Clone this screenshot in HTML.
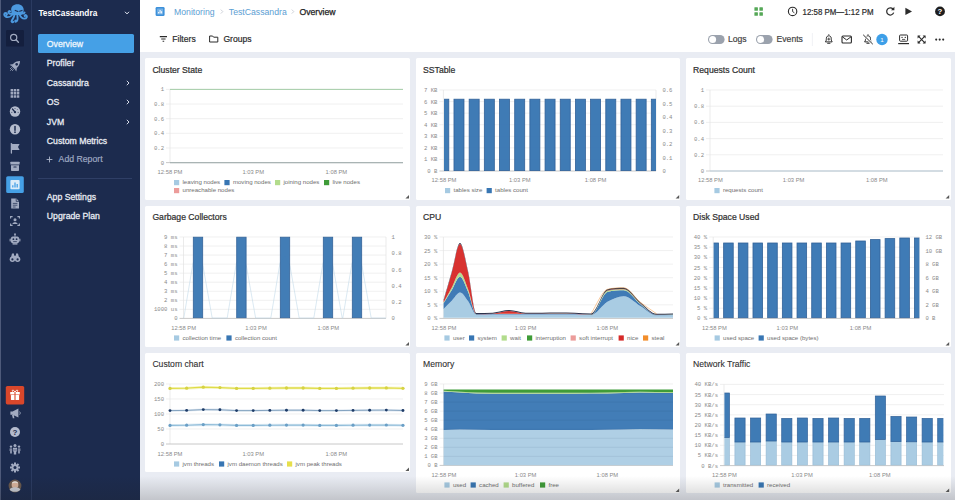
<!DOCTYPE html>
<html lang="en"><head><meta charset="utf-8"><title>TestCassandra - Overview</title>
<style>
*{margin:0;padding:0;box-sizing:border-box}
html,body{width:955px;height:500px;overflow:hidden}
body{position:relative;background:#e9ecf3;font-family:"Liberation Sans", sans-serif;color:#222}
.abs{position:absolute}
#iconbar{position:absolute;left:0;top:0;width:32px;height:500px;background:#1c2b4e;border-right:1px solid #2b3b61}
#edge{position:absolute;left:0;top:0;width:1.3px;height:500px;background:#4e5a7a}
#menu{position:absolute;left:32px;top:0;width:108.4px;height:500px;background:#1c2b4e}
#top{position:absolute;left:140.4px;top:0;width:814.6px;height:52px;background:#fff}
.card{position:absolute;background:#fff;border-radius:1.5px}
.ct{position:absolute;left:7.4px;top:5.6px;font-size:8.65px;line-height:12px;color:#303030;white-space:nowrap}
.ct.b{-webkit-text-stroke:0.22px #303030}
.ct.n{-webkit-text-stroke:0.1px #303030}
.app{position:absolute;left:6.4px;top:7px;font-size:8.3px;font-weight:bold;color:#fff;line-height:12px;white-space:nowrap}
.mi{position:absolute;left:14.8px;font-size:8.7px;line-height:14px;color:#e9ecf3;white-space:nowrap;-webkit-text-stroke:0.28px #e9ecf3}
.chev{position:absolute;left:94px}
#ov{position:absolute;left:5.6px;top:34.4px;width:96px;height:19px;background:#45a0e6;border-radius:1.6px}
#ov span{position:absolute;left:9.2px;top:2.8px;font-size:8.7px;line-height:14px;color:#eef6fd;-webkit-text-stroke:0.28px #eef6fd}
.bc{position:absolute;top:5.5px;font-size:8.7px;line-height:12px;white-space:nowrap}
.tb{position:absolute;top:33.5px;font-size:8.6px;line-height:12px;white-space:nowrap;color:#333;-webkit-text-stroke:0.2px #333}
svg text.s{font-family:"Liberation Sans", sans-serif}
svg text.m{font-family:"Liberation Mono", monospace}
#charts{position:absolute;left:0;top:0}
#shade{position:absolute;left:0;top:476px;width:955px;height:24px;background:linear-gradient(to bottom,rgba(30,30,30,0),rgba(30,30,30,0.19));pointer-events:none}
</style></head><body>
<div id="top"></div>
<svg class="abs" style="left:0;top:0" width="955" height="52" viewBox="0 0 955 52"><rect x="155.6" y="7" width="9" height="9" rx="1.3" fill="#3c90da"/><rect x="157.1" y="8.5" width="6" height="6" rx="0.6" fill="#fff" opacity="0.3"/><path d="M158.6 13.4 V12 M160.1 13.4 V10 M161.6 13.4 V11.2" stroke="#fff" stroke-width="0.95"/><text class="s" x="174" y="14.6" font-size="8.7" fill="#5b9ed3">Monitoring</text><path d="M220.8 9.6 L222.8 11.6 L220.8 13.6" fill="none" stroke="#c3c7cf" stroke-width="0.8"/><text class="s" x="228.8" y="14.6" font-size="8.7" fill="#5b9ed3">TestCassandra</text><path d="M291.8 9.6 L293.8 11.6 L291.8 13.6" fill="none" stroke="#c3c7cf" stroke-width="0.8"/><text class="s" x="299.4" y="14.6" font-size="8.7" fill="#222" stroke="#222" stroke-width="0.25">Overview</text><path d="M159.8 36.6 H167 M161.2 39 H165.6 M162.6 41.3 H164.2" stroke="#2b2b2b" stroke-width="1.1"/><text class="s" x="172.3" y="42.1" font-size="8.6" fill="#2b2b2b" stroke="#2b2b2b" stroke-width="0.2">Filters</text><path d="M209.6 36 H212.6 L213.6 37.2 H217.8 V42 H209.6 Z" fill="none" stroke="#2b2b2b" stroke-width="1" stroke-linejoin="round"/><text class="s" x="223.4" y="42.1" font-size="8.6" fill="#2b2b2b" stroke="#2b2b2b" stroke-width="0.2">Groups</text><rect x="754.4" y="7.2" width="3.5" height="3.5" rx="0.5" fill="#55a857"/><rect x="759.4" y="7.2" width="3.5" height="3.5" rx="0.5" fill="#55a857"/><rect x="754.4" y="12.2" width="3.5" height="3.5" rx="0.5" fill="#55a857"/><rect x="759.4" y="12.2" width="3.5" height="3.5" rx="0.5" fill="#55a857"/><circle cx="792.6" cy="11.4" r="4.2" fill="none" stroke="#2b2b2b" stroke-width="1.1"/><path d="M792.6 8.8 V11.6 L794.4 12.8" fill="none" stroke="#2b2b2b" stroke-width="0.9"/><text class="s" x="802.6" y="14.5" font-size="8.2" textLength="71" lengthAdjust="spacingAndGlyphs" fill="#2b2b2b" stroke="#2b2b2b" stroke-width="0.2">12:58 PM—1:12 PM</text><path d="M893 9 A3.6 3.6 0 1 0 893.7 12.6" fill="none" stroke="#2b2b2b" stroke-width="1.25"/><path d="M894.4 6.8 V10.2 H891 Z" fill="#2b2b2b"/><path d="M905.4 7.8 L912 11.4 L905.4 15 Z" fill="#2b2b2b"/><circle cx="940" cy="11.4" r="4.9" fill="#1e1e1e"/><text class="s" x="940" y="14.3" font-size="7.8" font-weight="bold" text-anchor="middle" fill="#fff">?</text><rect x="708" y="35" width="16.6" height="9" rx="4.5" fill="#9ba2ad"/><circle cx="712.6" cy="39.5" r="3.5" fill="#fff"/><rect x="756" y="35" width="16.6" height="9" rx="4.5" fill="#9ba2ad"/><circle cx="760.6" cy="39.5" r="3.5" fill="#fff"/><text class="s" x="728" y="42.3" font-size="8.6" fill="#444" stroke="#444" stroke-width="0.2">Logs</text><text class="s" x="776.6" y="42.3" font-size="8.6" fill="#444" stroke="#444" stroke-width="0.2">Events</text><path d="M812.4 33 V46" stroke="#eceef2" stroke-width="0.8"/><path d="M825.4 41.9 C826.5999999999999 40.7 826.1999999999999 38.7 826.4 37.9 C826.8 35.1 830.8 35.1 831.1999999999999 37.9 C831.4 38.7 831.0 40.7 832.1999999999999 41.9 Z" fill="none" stroke="#2b2b2b" stroke-width="1" stroke-linejoin="round"/><path d="M827.6999999999999 43.2 H829.9" stroke="#2b2b2b" stroke-width="1.1" stroke-linecap="round"/><path d="M828.8 35.1 V34.3" stroke="#2b2b2b" stroke-width="1"/><path d="M828.8 37.6 V40.6 M827.3 39.1 H830.3" stroke="#2b2b2b" stroke-width="0.8"/><rect x="842" y="36" width="9.4" height="7" rx="1" fill="none" stroke="#2b2b2b" stroke-width="1.1"/><path d="M842.4 36.8 L846.7 40 L851 36.8" fill="none" stroke="#2b2b2b" stroke-width="1"/><path d="M864.6 41.9 C865.8 40.7 865.4 38.7 865.6 37.9 C866 35.1 870 35.1 870.4 37.9 C870.6 38.7 870.2 40.7 871.4 41.9 Z" fill="none" stroke="#2b2b2b" stroke-width="1" stroke-linejoin="round"/><path d="M866.9 43.2 H869.1" stroke="#2b2b2b" stroke-width="1.1" stroke-linecap="round"/><path d="M868 35.1 V34.3" stroke="#2b2b2b" stroke-width="1"/><path d="M863 34.6 L873 44.4" stroke="#fff" stroke-width="2.4"/><path d="M863.2 34.8 L872.8 44.2" stroke="#2b2b2b" stroke-width="1"/><circle cx="882" cy="39.5" r="5.7" fill="#3d9fe8"/><text class="s" x="882" y="41.7" font-size="6.2" text-anchor="middle" fill="#fff">1</text><rect x="899.6" y="35" width="8" height="6.2" rx="0.8" fill="none" stroke="#2b2b2b" stroke-width="1"/><path d="M898.2 43.6 H909 " stroke="#2b2b2b" stroke-width="1.2"/><path d="M902 37.4h.1M905.2 37.4h.1" stroke="#2b2b2b" stroke-width="1.2" stroke-linecap="round"/><path d="M902 39.4 H905.2" stroke="#2b2b2b" stroke-width="0.8"/><path d="M918.4 36.2 L924.8 42.8 M924.8 36.2 L918.4 42.8" stroke="#2b2b2b" stroke-width="1.1"/><path d="M917.6 35.4 H920.6 L917.6 38.4 Z M925.6 35.4 V38.4 L922.6 35.4 Z M917.6 43.6 V40.6 L920.6 43.6 Z M925.6 43.6 H922.6 L925.6 40.6 Z" fill="#2b2b2b"/><circle cx="936.2" cy="39.6" r="1.05" fill="#2b2b2b"/><circle cx="939.7" cy="39.6" r="1.05" fill="#2b2b2b"/><circle cx="943.2" cy="39.6" r="1.05" fill="#2b2b2b"/></svg>
<div class="card" style="left:145px;top:58px;width:265.3px;height:141.8px"><div class="ct b">Cluster State</div></div>
<div class="card" style="left:415.7px;top:58px;width:264.6px;height:141.8px"><div class="ct b">SSTable</div></div>
<div class="card" style="left:685.7px;top:58px;width:264.9px;height:141.8px"><div class="ct b">Requests Count</div></div>
<div class="card" style="left:145px;top:205.6px;width:265.3px;height:141.4px"><div class="ct b">Garbage Collectors</div></div>
<div class="card" style="left:415.7px;top:205.6px;width:264.6px;height:141.4px"><div class="ct b">CPU</div></div>
<div class="card" style="left:685.7px;top:205.6px;width:264.9px;height:141.4px"><div class="ct b">Disk Space Used</div></div>
<div class="card" style="left:145px;top:352.8px;width:265.3px;height:119.6px"><div class="ct n">Custom chart</div></div>
<div class="card" style="left:415.7px;top:352.8px;width:264.6px;height:140.6px"><div class="ct n">Memory</div></div>
<div class="card" style="left:685.7px;top:352.8px;width:264.9px;height:140.6px"><div class="ct n">Network Traffic</div></div>

<svg id="charts" width="955" height="500" viewBox="0 0 955 500">
<line x1="166" y1="89.4" x2="403" y2="89.4" stroke="#eaeaea" stroke-width="0.7"/>
<text class="m" x="164" y="91.4" font-size="5.6" text-anchor="end" fill="#8a8a8a">1</text>
<line x1="166" y1="104.04" x2="403" y2="104.04" stroke="#eaeaea" stroke-width="0.7"/>
<text class="m" x="164" y="106.04" font-size="5.6" text-anchor="end" fill="#8a8a8a">0.8</text>
<line x1="166" y1="118.68" x2="403" y2="118.68" stroke="#eaeaea" stroke-width="0.7"/>
<text class="m" x="164" y="120.68" font-size="5.6" text-anchor="end" fill="#8a8a8a">0.6</text>
<line x1="166" y1="133.32" x2="403" y2="133.32" stroke="#eaeaea" stroke-width="0.7"/>
<text class="m" x="164" y="135.32" font-size="5.6" text-anchor="end" fill="#8a8a8a">0.4</text>
<line x1="166" y1="147.96" x2="403" y2="147.96" stroke="#eaeaea" stroke-width="0.7"/>
<text class="m" x="164" y="149.96" font-size="5.6" text-anchor="end" fill="#8a8a8a">0.2</text>
<text class="m" x="164" y="164.6" font-size="5.6" text-anchor="end" fill="#8a8a8a">0</text>
<line x1="170" y1="89.4" x2="170" y2="162.6" stroke="#e2e2e2" stroke-width="0.7"/>
<line x1="166" y1="162.6" x2="403" y2="162.6" stroke="#c2c2c2" stroke-width="0.9"/>
<text class="s" x="170" y="174.1" font-size="5.8" text-anchor="middle" fill="#8a8a8a">12:58 PM</text>
<text class="s" x="253.2" y="174.1" font-size="5.8" text-anchor="middle" fill="#8a8a8a">1:03 PM</text>
<text class="s" x="336.4" y="174.1" font-size="5.8" text-anchor="middle" fill="#8a8a8a">1:08 PM</text>
<line x1="170" y1="89.4" x2="403" y2="89.4" stroke="#9cc8a0" stroke-width="0.9"/>
<line x1="170" y1="162.6" x2="403" y2="162.6" stroke="#a9b4b4" stroke-width="1.3"/>
<rect x="174" y="180" width="5.2" height="5.2" fill="#a6cae2"/>
<text class="s" x="182.5" y="184.4" font-size="6.1" text-anchor="start" fill="#6f6f6f">leaving nodes</text>
<rect x="224.4" y="180" width="5.2" height="5.2" fill="#3876b3"/>
<text class="s" x="232.9" y="184.4" font-size="6.1" text-anchor="start" fill="#6f6f6f">moving nodes</text>
<rect x="275" y="180" width="5.2" height="5.2" fill="#b2dc8c"/>
<text class="s" x="283.5" y="184.4" font-size="6.1" text-anchor="start" fill="#6f6f6f">joining nodes</text>
<rect x="324" y="180" width="5.2" height="5.2" fill="#3f9c38"/>
<text class="s" x="332.5" y="184.4" font-size="6.1" text-anchor="start" fill="#6f6f6f">live nodes</text>
<rect x="174" y="188" width="5.2" height="5.2" fill="#ec9c9a"/>
<text class="s" x="182.5" y="192.4" font-size="6.1" text-anchor="start" fill="#6f6f6f">unreachable nodes</text>
<path d="M409 195 L409 198.6 L405.4 198.6 Z" fill="#5a5a5a"/>
<line x1="439.4" y1="90" x2="656" y2="90" stroke="#eaeaea" stroke-width="0.7"/>
<text class="m" x="437.4" y="92" font-size="5.6" text-anchor="end" fill="#8a8a8a">7 KB</text>
<line x1="439.4" y1="101.57" x2="656" y2="101.57" stroke="#eaeaea" stroke-width="0.7"/>
<text class="m" x="437.4" y="103.57" font-size="5.6" text-anchor="end" fill="#8a8a8a">6 KB</text>
<line x1="439.4" y1="113.14" x2="656" y2="113.14" stroke="#eaeaea" stroke-width="0.7"/>
<text class="m" x="437.4" y="115.14" font-size="5.6" text-anchor="end" fill="#8a8a8a">5 KB</text>
<line x1="439.4" y1="124.71" x2="656" y2="124.71" stroke="#eaeaea" stroke-width="0.7"/>
<text class="m" x="437.4" y="126.71" font-size="5.6" text-anchor="end" fill="#8a8a8a">4 KB</text>
<line x1="439.4" y1="136.29" x2="656" y2="136.29" stroke="#eaeaea" stroke-width="0.7"/>
<text class="m" x="437.4" y="138.29" font-size="5.6" text-anchor="end" fill="#8a8a8a">3 KB</text>
<line x1="439.4" y1="147.86" x2="656" y2="147.86" stroke="#eaeaea" stroke-width="0.7"/>
<text class="m" x="437.4" y="149.86" font-size="5.6" text-anchor="end" fill="#8a8a8a">2 KB</text>
<line x1="439.4" y1="159.43" x2="656" y2="159.43" stroke="#eaeaea" stroke-width="0.7"/>
<text class="m" x="437.4" y="161.43" font-size="5.6" text-anchor="end" fill="#8a8a8a">1 KB</text>
<text class="m" x="437.4" y="173" font-size="5.6" text-anchor="end" fill="#8a8a8a">0 B</text>
<line x1="443.4" y1="90" x2="443.4" y2="171" stroke="#e2e2e2" stroke-width="0.7"/>
<line x1="439.4" y1="171" x2="656" y2="171" stroke="#c2c2c2" stroke-width="0.9"/>
<text class="s" x="444" y="182.1" font-size="5.8" text-anchor="middle" fill="#8a8a8a">12:58 PM</text>
<text class="s" x="519.8" y="182.1" font-size="5.8" text-anchor="middle" fill="#8a8a8a">1:03 PM</text>
<text class="s" x="595.6" y="182.1" font-size="5.8" text-anchor="middle" fill="#8a8a8a">1:08 PM</text>
<text class="m" x="662.4" y="92.4" font-size="5.6" text-anchor="start" fill="#8a8a8a">0.6</text>
<text class="m" x="662.4" y="105.85" font-size="5.6" text-anchor="start" fill="#8a8a8a">0.5</text>
<text class="m" x="662.4" y="119.3" font-size="5.6" text-anchor="start" fill="#8a8a8a">0.4</text>
<text class="m" x="662.4" y="132.75" font-size="5.6" text-anchor="start" fill="#8a8a8a">0.3</text>
<text class="m" x="662.4" y="146.2" font-size="5.6" text-anchor="start" fill="#8a8a8a">0.2</text>
<text class="m" x="662.4" y="159.65" font-size="5.6" text-anchor="start" fill="#8a8a8a">0.1</text>
<text class="m" x="662.4" y="173.1" font-size="5.6" text-anchor="start" fill="#8a8a8a">0</text>
<line x1="656" y1="90" x2="656" y2="171" stroke="#e2e2e2" stroke-width="0.7"/>
<clipPath id="c2"><rect x="444" y="89" width="212" height="82"/></clipPath>
<g clip-path="url(#c2)" opacity="0.96">
<rect x="438.8" y="99.2" width="10" height="71.4" fill="#3876b3" stroke="#2a5c95" stroke-width="0.8"/>
<rect x="453.98" y="99.2" width="10" height="71.4" fill="#3876b3" stroke="#2a5c95" stroke-width="0.8"/>
<rect x="469.16" y="99.2" width="10" height="71.4" fill="#3876b3" stroke="#2a5c95" stroke-width="0.8"/>
<rect x="484.34" y="99.2" width="10" height="71.4" fill="#3876b3" stroke="#2a5c95" stroke-width="0.8"/>
<rect x="499.52" y="99.2" width="10" height="71.4" fill="#3876b3" stroke="#2a5c95" stroke-width="0.8"/>
<rect x="514.7" y="99.2" width="10" height="71.4" fill="#3876b3" stroke="#2a5c95" stroke-width="0.8"/>
<rect x="529.88" y="99.2" width="10" height="71.4" fill="#3876b3" stroke="#2a5c95" stroke-width="0.8"/>
<rect x="545.06" y="99.2" width="10" height="71.4" fill="#3876b3" stroke="#2a5c95" stroke-width="0.8"/>
<rect x="560.24" y="99.2" width="10" height="71.4" fill="#3876b3" stroke="#2a5c95" stroke-width="0.8"/>
<rect x="575.42" y="99.2" width="10" height="71.4" fill="#3876b3" stroke="#2a5c95" stroke-width="0.8"/>
<rect x="590.6" y="99.2" width="10" height="71.4" fill="#3876b3" stroke="#2a5c95" stroke-width="0.8"/>
<rect x="605.78" y="99.2" width="10" height="71.4" fill="#3876b3" stroke="#2a5c95" stroke-width="0.8"/>
<rect x="620.96" y="99.2" width="10" height="71.4" fill="#3876b3" stroke="#2a5c95" stroke-width="0.8"/>
<rect x="636.14" y="99.2" width="10" height="71.4" fill="#3876b3" stroke="#2a5c95" stroke-width="0.8"/>
<rect x="651.32" y="99.2" width="10" height="71.4" fill="#3876b3" stroke="#2a5c95" stroke-width="0.8"/>
</g>
<rect x="445" y="188" width="5.2" height="5.2" fill="#a6cae2"/>
<text class="s" x="453.5" y="192.4" font-size="6.1" text-anchor="start" fill="#6f6f6f">tables size</text>
<rect x="486.6" y="188" width="5.2" height="5.2" fill="#3876b3"/>
<text class="s" x="495.1" y="192.4" font-size="6.1" text-anchor="start" fill="#6f6f6f">tables count</text>
<path d="M679.2 195 L679.2 198.6 L675.6 198.6 Z" fill="#5a5a5a"/>
<line x1="706" y1="90" x2="943" y2="90" stroke="#eaeaea" stroke-width="0.7"/>
<text class="m" x="704" y="92" font-size="5.6" text-anchor="end" fill="#8a8a8a">1</text>
<line x1="706" y1="106.2" x2="943" y2="106.2" stroke="#eaeaea" stroke-width="0.7"/>
<text class="m" x="704" y="108.2" font-size="5.6" text-anchor="end" fill="#8a8a8a">0.8</text>
<line x1="706" y1="122.4" x2="943" y2="122.4" stroke="#eaeaea" stroke-width="0.7"/>
<text class="m" x="704" y="124.4" font-size="5.6" text-anchor="end" fill="#8a8a8a">0.6</text>
<line x1="706" y1="138.6" x2="943" y2="138.6" stroke="#eaeaea" stroke-width="0.7"/>
<text class="m" x="704" y="140.6" font-size="5.6" text-anchor="end" fill="#8a8a8a">0.4</text>
<line x1="706" y1="154.8" x2="943" y2="154.8" stroke="#eaeaea" stroke-width="0.7"/>
<text class="m" x="704" y="156.8" font-size="5.6" text-anchor="end" fill="#8a8a8a">0.2</text>
<text class="m" x="704" y="173" font-size="5.6" text-anchor="end" fill="#8a8a8a">0</text>
<line x1="710" y1="90" x2="710" y2="171" stroke="#e2e2e2" stroke-width="0.7"/>
<line x1="706" y1="171" x2="943" y2="171" stroke="#c2c2c2" stroke-width="0.9"/>
<text class="s" x="710.4" y="182.1" font-size="5.8" text-anchor="middle" fill="#8a8a8a">12:58 PM</text>
<text class="s" x="793.6" y="182.1" font-size="5.8" text-anchor="middle" fill="#8a8a8a">1:03 PM</text>
<text class="s" x="876.8" y="182.1" font-size="5.8" text-anchor="middle" fill="#8a8a8a">1:08 PM</text>
<line x1="710" y1="171" x2="943" y2="171" stroke="#c3d5e2" stroke-width="1.0"/>
<rect x="714.4" y="188" width="5.2" height="5.2" fill="#a6cae2"/>
<text class="s" x="722.9" y="192.4" font-size="6.1" text-anchor="start" fill="#6f6f6f">requests count</text>
<path d="M949.2 195 L949.2 198.6 L945.6 198.6 Z" fill="#5a5a5a"/>
<line x1="179.5" y1="237" x2="386" y2="237" stroke="#eaeaea" stroke-width="0.7"/>
<text class="m" x="177.5" y="239" font-size="5.6" text-anchor="end" fill="#8a8a8a">9 ms</text>
<line x1="179.5" y1="246.04" x2="386" y2="246.04" stroke="#eaeaea" stroke-width="0.7"/>
<text class="m" x="177.5" y="248.04" font-size="5.6" text-anchor="end" fill="#8a8a8a">8 ms</text>
<line x1="179.5" y1="255.09" x2="386" y2="255.09" stroke="#eaeaea" stroke-width="0.7"/>
<text class="m" x="177.5" y="257.09" font-size="5.6" text-anchor="end" fill="#8a8a8a">7 ms</text>
<line x1="179.5" y1="264.13" x2="386" y2="264.13" stroke="#eaeaea" stroke-width="0.7"/>
<text class="m" x="177.5" y="266.13" font-size="5.6" text-anchor="end" fill="#8a8a8a">6 ms</text>
<line x1="179.5" y1="273.18" x2="386" y2="273.18" stroke="#eaeaea" stroke-width="0.7"/>
<text class="m" x="177.5" y="275.18" font-size="5.6" text-anchor="end" fill="#8a8a8a">5 ms</text>
<line x1="179.5" y1="282.22" x2="386" y2="282.22" stroke="#eaeaea" stroke-width="0.7"/>
<text class="m" x="177.5" y="284.22" font-size="5.6" text-anchor="end" fill="#8a8a8a">4 ms</text>
<line x1="179.5" y1="291.27" x2="386" y2="291.27" stroke="#eaeaea" stroke-width="0.7"/>
<text class="m" x="177.5" y="293.27" font-size="5.6" text-anchor="end" fill="#8a8a8a">3 ms</text>
<line x1="179.5" y1="300.31" x2="386" y2="300.31" stroke="#eaeaea" stroke-width="0.7"/>
<text class="m" x="177.5" y="302.31" font-size="5.6" text-anchor="end" fill="#8a8a8a">2 ms</text>
<line x1="179.5" y1="309.36" x2="386" y2="309.36" stroke="#eaeaea" stroke-width="0.7"/>
<text class="m" x="177.5" y="311.36" font-size="5.6" text-anchor="end" fill="#8a8a8a">1000 us</text>
<text class="m" x="177.5" y="320.4" font-size="5.6" text-anchor="end" fill="#8a8a8a">0</text>
<line x1="183.5" y1="237" x2="183.5" y2="318.4" stroke="#e2e2e2" stroke-width="0.7"/>
<line x1="179.5" y1="318.4" x2="386" y2="318.4" stroke="#c2c2c2" stroke-width="0.9"/>
<text class="s" x="183.6" y="329.5" font-size="5.8" text-anchor="middle" fill="#8a8a8a">12:58 PM</text>
<text class="s" x="256" y="329.5" font-size="5.8" text-anchor="middle" fill="#8a8a8a">1:03 PM</text>
<text class="s" x="328.4" y="329.5" font-size="5.8" text-anchor="middle" fill="#8a8a8a">1:08 PM</text>
<text class="m" x="391.6" y="239" font-size="5.6" text-anchor="start" fill="#8a8a8a">1</text>
<text class="m" x="391.6" y="255.28" font-size="5.6" text-anchor="start" fill="#8a8a8a">0.8</text>
<text class="m" x="391.6" y="271.56" font-size="5.6" text-anchor="start" fill="#8a8a8a">0.6</text>
<text class="m" x="391.6" y="287.84" font-size="5.6" text-anchor="start" fill="#8a8a8a">0.4</text>
<text class="m" x="391.6" y="304.12" font-size="5.6" text-anchor="start" fill="#8a8a8a">0.2</text>
<text class="m" x="391.6" y="320.4" font-size="5.6" text-anchor="start" fill="#8a8a8a">0</text>
<line x1="386" y1="237" x2="386" y2="318.4" stroke="#e2e2e2" stroke-width="0.7"/>
<polyline fill="none" stroke="#bdd7e8" stroke-width="0.55" points="183.5,318 183.8,318 193,263 198,256 203,266 212.2,318 227.2,318 236.4,263 241.4,256 246.4,266 255.6,318 270.8,318 280,263 285,256 290,266 299.2,318 313.8,318 323,263 328,256 333,266 342.2,318 342.8,318 352,263 357,256 362,266 371.2,318 386,318"/>
<clipPath id="c4"><rect x="183.5" y="236" width="202.5" height="82.4"/></clipPath>
<g clip-path="url(#c4)" opacity="0.95">
<rect x="193.3" y="237.2" width="9.4" height="80.6" fill="#3876b3" stroke="#2a5c95" stroke-width="0.8"/>
<rect x="236.7" y="237.2" width="9.4" height="80.6" fill="#3876b3" stroke="#2a5c95" stroke-width="0.8"/>
<rect x="280.3" y="237.2" width="9.4" height="80.6" fill="#3876b3" stroke="#2a5c95" stroke-width="0.8"/>
<rect x="323.3" y="237.2" width="9.4" height="80.6" fill="#3876b3" stroke="#2a5c95" stroke-width="0.8"/>
<rect x="352.3" y="237.2" width="9.4" height="80.6" fill="#3876b3" stroke="#2a5c95" stroke-width="0.8"/>
</g>
<rect x="174" y="335.4" width="5.2" height="5.2" fill="#a6cae2"/>
<text class="s" x="182.5" y="339.8" font-size="6.1" text-anchor="start" fill="#6f6f6f">collection time</text>
<rect x="226.4" y="335.4" width="5.2" height="5.2" fill="#3876b3"/>
<text class="s" x="234.9" y="339.8" font-size="6.1" text-anchor="start" fill="#6f6f6f">collection count</text>
<path d="M409 342 L409 345.6 L405.4 345.6 Z" fill="#5a5a5a"/>
<line x1="439.4" y1="237" x2="673" y2="237" stroke="#eaeaea" stroke-width="0.7"/>
<text class="m" x="437.4" y="239" font-size="5.6" text-anchor="end" fill="#8a8a8a">30 %</text>
<line x1="439.4" y1="250.57" x2="673" y2="250.57" stroke="#eaeaea" stroke-width="0.7"/>
<text class="m" x="437.4" y="252.57" font-size="5.6" text-anchor="end" fill="#8a8a8a">25 %</text>
<line x1="439.4" y1="264.13" x2="673" y2="264.13" stroke="#eaeaea" stroke-width="0.7"/>
<text class="m" x="437.4" y="266.13" font-size="5.6" text-anchor="end" fill="#8a8a8a">20 %</text>
<line x1="439.4" y1="277.7" x2="673" y2="277.7" stroke="#eaeaea" stroke-width="0.7"/>
<text class="m" x="437.4" y="279.7" font-size="5.6" text-anchor="end" fill="#8a8a8a">15 %</text>
<line x1="439.4" y1="291.27" x2="673" y2="291.27" stroke="#eaeaea" stroke-width="0.7"/>
<text class="m" x="437.4" y="293.27" font-size="5.6" text-anchor="end" fill="#8a8a8a">10 %</text>
<line x1="439.4" y1="304.83" x2="673" y2="304.83" stroke="#eaeaea" stroke-width="0.7"/>
<text class="m" x="437.4" y="306.83" font-size="5.6" text-anchor="end" fill="#8a8a8a">5 %</text>
<text class="m" x="437.4" y="320.4" font-size="5.6" text-anchor="end" fill="#8a8a8a">0 %</text>
<line x1="443.4" y1="237" x2="443.4" y2="318.4" stroke="#e2e2e2" stroke-width="0.7"/>
<line x1="439.4" y1="318.4" x2="673" y2="318.4" stroke="#c2c2c2" stroke-width="0.9"/>
<text class="s" x="444" y="329.5" font-size="5.8" text-anchor="middle" fill="#8a8a8a">12:58 PM</text>
<text class="s" x="525.6" y="329.5" font-size="5.8" text-anchor="middle" fill="#8a8a8a">1:03 PM</text>
<text class="s" x="607.4" y="329.5" font-size="5.8" text-anchor="middle" fill="#8a8a8a">1:08 PM</text>
<path d="M443.6 308.89C446.33 306.14 449.06 303.4 451.79 300.66C454.52 297.91 457.25 292.42 459.99 292.42C462.72 292.42 465.45 297.62 468.18 301.36C470.91 305.09 473.64 314.83 476.37 314.83C481.83 314.83 487.3 314.56 492.76 314.56C498.22 314.56 503.68 314.56 509.14 314.56C514.6 314.56 520.07 314.56 525.53 314.56C530.99 314.56 536.45 314.56 541.91 314.56C547.38 314.56 552.84 314.56 558.3 314.56C563.76 314.56 569.22 314.56 574.69 314.56C580.15 314.56 585.61 315.1 591.07 315.1C596.53 315.1 602 305.02 607.46 301.87C612.92 298.72 618.38 296.2 623.84 296.2C629.3 296.2 634.77 302.73 640.23 305.92C645.69 309.12 651.15 315.37 656.61 315.37C662.08 315.37 667.54 315.19 673 315.1L673 317.8C667.54 317.8 662.08 317.8 656.61 317.8C651.15 317.8 645.69 317.8 640.23 317.8C634.77 317.8 629.3 317.8 623.84 317.8C618.38 317.8 612.92 317.8 607.46 317.8C602 317.8 596.53 317.8 591.07 317.8C585.61 317.8 580.15 317.8 574.69 317.8C569.22 317.8 563.76 317.8 558.3 317.8C552.84 317.8 547.38 317.8 541.91 317.8C536.45 317.8 530.99 317.8 525.53 317.8C520.07 317.8 514.6 317.8 509.14 317.8C503.68 317.8 498.22 317.8 492.76 317.8C487.3 317.8 481.83 317.8 476.37 317.8C473.64 317.8 470.91 317.8 468.18 317.8C465.45 317.8 462.72 317.8 459.99 317.8C457.25 317.8 454.52 317.8 451.79 317.8C449.06 317.8 446.33 317.8 443.6 317.8Z" fill="#a6cae2" opacity="0.96"/>
<path d="M443.6 303.22C446.33 298.81 449.06 294.4 451.79 289.99C454.52 285.58 457.25 276.76 459.99 276.76C462.72 276.76 465.45 285.71 468.18 291.96C470.91 298.22 473.64 314.29 476.37 314.29C481.83 314.29 487.3 314.09 492.76 314.02C498.22 313.95 503.68 313.88 509.14 313.88C514.6 313.88 520.07 314.02 525.53 314.02C530.99 314.02 536.45 314.02 541.91 314.02C547.38 314.02 552.84 313.88 558.3 313.88C563.76 313.88 569.22 313.89 574.69 314.02C580.15 314.16 585.61 314.69 591.07 314.69C596.53 314.69 602 293.5 607.46 291.88C612.92 290.26 618.38 290.26 623.84 290.26C629.3 290.26 634.77 299.91 640.23 304.03C645.69 308.15 651.15 314.97 656.61 314.97C662.08 314.97 667.54 314.79 673 314.69L673 315.1C667.54 315.19 662.08 315.37 656.61 315.37C651.15 315.37 645.69 309.12 640.23 305.92C634.77 302.73 629.3 296.2 623.84 296.2C618.38 296.2 612.92 298.72 607.46 301.87C602 305.02 596.53 315.1 591.07 315.1C585.61 315.1 580.15 314.56 574.69 314.56C569.22 314.56 563.76 314.56 558.3 314.56C552.84 314.56 547.38 314.56 541.91 314.56C536.45 314.56 530.99 314.56 525.53 314.56C520.07 314.56 514.6 314.56 509.14 314.56C503.68 314.56 498.22 314.56 492.76 314.56C487.3 314.56 481.83 314.83 476.37 314.83C473.64 314.83 470.91 305.09 468.18 301.36C465.45 297.62 462.72 292.42 459.99 292.42C457.25 292.42 454.52 297.91 451.79 300.66C449.06 303.4 446.33 306.14 443.6 308.89Z" fill="#3876b3" opacity="0.96"/>
<path d="M443.6 302.41C446.33 297.42 449.06 292.42 451.79 287.43C454.52 282.43 457.25 272.44 459.99 272.44C462.72 272.44 465.45 282.45 468.18 289.41C470.91 296.37 473.64 314.21 476.37 314.21C481.83 314.21 487.3 314.01 492.76 313.94C498.22 313.87 503.68 313.8 509.14 313.8C514.6 313.8 520.07 313.94 525.53 313.94C530.99 313.94 536.45 313.94 541.91 313.94C547.38 313.94 552.84 313.8 558.3 313.8C563.76 313.8 569.22 313.8 574.69 313.94C580.15 314.07 585.61 314.61 591.07 314.61C596.53 314.61 602 292.29 607.46 290.8C612.92 289.31 618.38 289.31 623.84 289.31C629.3 289.31 634.77 299.23 640.23 303.49C645.69 307.75 651.15 314.88 656.61 314.88C662.08 314.88 667.54 314.7 673 314.61L673 314.69C667.54 314.79 662.08 314.97 656.61 314.97C651.15 314.97 645.69 308.15 640.23 304.03C634.77 299.91 629.3 290.26 623.84 290.26C618.38 290.26 612.92 290.26 607.46 291.88C602 293.5 596.53 314.69 591.07 314.69C585.61 314.69 580.15 314.16 574.69 314.02C569.22 313.89 563.76 313.88 558.3 313.88C552.84 313.88 547.38 314.02 541.91 314.02C536.45 314.02 530.99 314.02 525.53 314.02C520.07 314.02 514.6 313.88 509.14 313.88C503.68 313.88 498.22 313.95 492.76 314.02C487.3 314.09 481.83 314.29 476.37 314.29C473.64 314.29 470.91 298.22 468.18 291.96C465.45 285.71 462.72 276.76 459.99 276.76C457.25 276.76 454.52 285.58 451.79 289.99C449.06 294.4 446.33 298.81 443.6 303.22Z" fill="#b2dc8c" opacity="0.96"/>
<path d="M443.6 300.79C446.33 291.34 449.06 281.89 451.79 272.44C454.52 262.99 457.25 244.09 459.99 244.09C462.72 244.09 465.45 261.25 468.18 272.92C470.91 284.59 473.64 314.13 476.37 314.13C481.83 314.13 487.3 314.13 492.76 313.75C498.22 313.37 503.68 311.05 509.14 311.05C514.6 311.05 520.07 313.64 525.53 313.75C530.99 313.86 536.45 313.86 541.91 313.86C547.38 313.86 552.84 313.62 558.3 313.62C563.76 313.62 569.22 313.7 574.69 313.86C580.15 314.02 585.61 314.56 591.07 314.56C596.53 314.56 602 291.88 607.46 290.39C612.92 288.91 618.38 288.91 623.84 288.91C629.3 288.91 634.77 298.9 640.23 303.22C645.69 307.54 651.15 314.83 656.61 314.83C662.08 314.83 667.54 314.65 673 314.56L673 314.61C667.54 314.7 662.08 314.88 656.61 314.88C651.15 314.88 645.69 307.75 640.23 303.49C634.77 299.23 629.3 289.31 623.84 289.31C618.38 289.31 612.92 289.31 607.46 290.8C602 292.29 596.53 314.61 591.07 314.61C585.61 314.61 580.15 314.07 574.69 313.94C569.22 313.8 563.76 313.8 558.3 313.8C552.84 313.8 547.38 313.94 541.91 313.94C536.45 313.94 530.99 313.94 525.53 313.94C520.07 313.94 514.6 313.8 509.14 313.8C503.68 313.8 498.22 313.87 492.76 313.94C487.3 314.01 481.83 314.21 476.37 314.21C473.64 314.21 470.91 296.37 468.18 289.41C465.45 282.45 462.72 272.44 459.99 272.44C457.25 272.44 454.52 282.43 451.79 287.43C449.06 292.42 446.33 297.42 443.6 302.41Z" fill="#d62a28" opacity="0.96"/>
<path d="M443.6 299.85C446.33 290.37 449.06 280.9 451.79 271.43C454.52 261.96 457.25 243.01 459.99 243.01C462.72 243.01 465.45 259.99 468.18 271.67C470.91 283.34 473.64 313.05 476.37 313.05C481.83 313.05 487.3 313.05 492.76 312.67C498.22 312.29 503.68 309.97 509.14 309.97C514.6 309.97 520.07 312.56 525.53 312.67C530.99 312.78 536.45 312.78 541.91 312.78C547.38 312.78 552.84 312.54 558.3 312.54C563.76 312.54 569.22 312.62 574.69 312.78C580.15 312.94 585.61 313.48 591.07 313.48C596.53 313.48 602 290.8 607.46 289.31C612.92 287.83 618.38 287.83 623.84 287.83C629.3 287.83 634.77 297.82 640.23 302.14C645.69 306.46 651.15 313.75 656.61 313.75C662.08 313.75 667.54 313.57 673 313.48L673 314.56C667.54 314.65 662.08 314.83 656.61 314.83C651.15 314.83 645.69 307.54 640.23 303.22C634.77 298.9 629.3 288.91 623.84 288.91C618.38 288.91 612.92 288.91 607.46 290.39C602 291.88 596.53 314.56 591.07 314.56C585.61 314.56 580.15 314.02 574.69 313.86C569.22 313.7 563.76 313.62 558.3 313.62C552.84 313.62 547.38 313.86 541.91 313.86C536.45 313.86 530.99 313.86 525.53 313.75C520.07 313.64 514.6 311.05 509.14 311.05C503.68 311.05 498.22 313.37 492.76 313.75C487.3 314.13 481.83 314.13 476.37 314.13C473.64 314.13 470.91 284.59 468.18 272.92C465.45 261.25 462.72 244.09 459.99 244.09C457.25 244.09 454.52 262.99 451.79 272.44C449.06 281.89 446.33 291.34 443.6 300.79Z" fill="#232a44" opacity="0.96"/>
<path d="M591.07 313.48C596.53 305.43 602 290.8 607.46 289.31C612.92 287.83 618.38 287.83 623.84 287.83C629.3 287.83 634.77 297.82 640.23 302.14C645.69 306.46 651.15 309.88 656.61 313.75" fill="none" stroke="#f28e2b" stroke-width="0.6" opacity="0.8"/>
<rect x="444.4" y="335.4" width="5.2" height="5.2" fill="#a6cae2"/>
<text class="s" x="452.9" y="339.8" font-size="6.1" text-anchor="start" fill="#6f6f6f">user</text>
<rect x="469" y="335.4" width="5.2" height="5.2" fill="#3876b3"/>
<text class="s" x="477.5" y="339.8" font-size="6.1" text-anchor="start" fill="#6f6f6f">system</text>
<rect x="501.6" y="335.4" width="5.2" height="5.2" fill="#b2dc8c"/>
<text class="s" x="510.1" y="339.8" font-size="6.1" text-anchor="start" fill="#6f6f6f">wait</text>
<rect x="527" y="335.4" width="5.2" height="5.2" fill="#3f9c38"/>
<text class="s" x="535.5" y="339.8" font-size="6.1" text-anchor="start" fill="#6f6f6f">interruption</text>
<rect x="570.6" y="335.4" width="5.2" height="5.2" fill="#ec9c9a"/>
<text class="s" x="579.1" y="339.8" font-size="6.1" text-anchor="start" fill="#6f6f6f">soft interrupt</text>
<rect x="618.6" y="335.4" width="5.2" height="5.2" fill="#d62a28"/>
<text class="s" x="627.1" y="339.8" font-size="6.1" text-anchor="start" fill="#6f6f6f">nice</text>
<rect x="643" y="335.4" width="5.2" height="5.2" fill="#f28e2b"/>
<text class="s" x="651.5" y="339.8" font-size="6.1" text-anchor="start" fill="#6f6f6f">steal</text>
<path d="M679.2 342 L679.2 345.6 L675.6 345.6 Z" fill="#5a5a5a"/>
<line x1="709.2" y1="237" x2="919.4" y2="237" stroke="#eaeaea" stroke-width="0.7"/>
<text class="m" x="707.2" y="239" font-size="5.6" text-anchor="end" fill="#8a8a8a">40 %</text>
<line x1="709.2" y1="247.18" x2="919.4" y2="247.18" stroke="#eaeaea" stroke-width="0.7"/>
<text class="m" x="707.2" y="249.18" font-size="5.6" text-anchor="end" fill="#8a8a8a">35 %</text>
<line x1="709.2" y1="257.35" x2="919.4" y2="257.35" stroke="#eaeaea" stroke-width="0.7"/>
<text class="m" x="707.2" y="259.35" font-size="5.6" text-anchor="end" fill="#8a8a8a">30 %</text>
<line x1="709.2" y1="267.52" x2="919.4" y2="267.52" stroke="#eaeaea" stroke-width="0.7"/>
<text class="m" x="707.2" y="269.52" font-size="5.6" text-anchor="end" fill="#8a8a8a">25 %</text>
<line x1="709.2" y1="277.7" x2="919.4" y2="277.7" stroke="#eaeaea" stroke-width="0.7"/>
<text class="m" x="707.2" y="279.7" font-size="5.6" text-anchor="end" fill="#8a8a8a">20 %</text>
<line x1="709.2" y1="287.88" x2="919.4" y2="287.88" stroke="#eaeaea" stroke-width="0.7"/>
<text class="m" x="707.2" y="289.88" font-size="5.6" text-anchor="end" fill="#8a8a8a">15 %</text>
<line x1="709.2" y1="298.05" x2="919.4" y2="298.05" stroke="#eaeaea" stroke-width="0.7"/>
<text class="m" x="707.2" y="300.05" font-size="5.6" text-anchor="end" fill="#8a8a8a">10 %</text>
<line x1="709.2" y1="308.22" x2="919.4" y2="308.22" stroke="#eaeaea" stroke-width="0.7"/>
<text class="m" x="707.2" y="310.22" font-size="5.6" text-anchor="end" fill="#8a8a8a">5 %</text>
<text class="m" x="707.2" y="320.4" font-size="5.6" text-anchor="end" fill="#8a8a8a">0 %</text>
<line x1="713.2" y1="237" x2="713.2" y2="318.4" stroke="#e2e2e2" stroke-width="0.7"/>
<line x1="709.2" y1="318.4" x2="919.4" y2="318.4" stroke="#c2c2c2" stroke-width="0.9"/>
<text class="s" x="714.4" y="329.5" font-size="5.8" text-anchor="middle" fill="#8a8a8a">12:58 PM</text>
<text class="s" x="787.4" y="329.5" font-size="5.8" text-anchor="middle" fill="#8a8a8a">1:03 PM</text>
<text class="s" x="860.6" y="329.5" font-size="5.8" text-anchor="middle" fill="#8a8a8a">1:08 PM</text>
<text class="m" x="925.4" y="239" font-size="5.6" text-anchor="start" fill="#8a8a8a">12 GB</text>
<text class="m" x="925.4" y="252.57" font-size="5.6" text-anchor="start" fill="#8a8a8a">10 GB</text>
<text class="m" x="925.4" y="266.14" font-size="5.6" text-anchor="start" fill="#8a8a8a">8 GB</text>
<text class="m" x="925.4" y="279.71" font-size="5.6" text-anchor="start" fill="#8a8a8a">6 GB</text>
<text class="m" x="925.4" y="293.28" font-size="5.6" text-anchor="start" fill="#8a8a8a">4 GB</text>
<text class="m" x="925.4" y="306.85" font-size="5.6" text-anchor="start" fill="#8a8a8a">2 GB</text>
<text class="m" x="925.4" y="320.42" font-size="5.6" text-anchor="start" fill="#8a8a8a">0 B</text>
<line x1="919.4" y1="237" x2="919.4" y2="318.4" stroke="#e2e2e2" stroke-width="0.7"/>
<clipPath id="c6"><rect x="713.6" y="236" width="205.8" height="82.4"/></clipPath>
<g clip-path="url(#c6)" opacity="0.96">
<rect x="708.95" y="243" width="9.6" height="74.8" fill="#3876b3" stroke="#2a5c95" stroke-width="0.8"/>
<rect x="723.63" y="243" width="9.6" height="74.8" fill="#3876b3" stroke="#2a5c95" stroke-width="0.8"/>
<rect x="738.31" y="243" width="9.6" height="74.8" fill="#3876b3" stroke="#2a5c95" stroke-width="0.8"/>
<rect x="752.99" y="243" width="9.6" height="74.8" fill="#3876b3" stroke="#2a5c95" stroke-width="0.8"/>
<rect x="767.67" y="243" width="9.6" height="74.8" fill="#3876b3" stroke="#2a5c95" stroke-width="0.8"/>
<rect x="782.35" y="243" width="9.6" height="74.8" fill="#3876b3" stroke="#2a5c95" stroke-width="0.8"/>
<rect x="797.03" y="243" width="9.6" height="74.8" fill="#3876b3" stroke="#2a5c95" stroke-width="0.8"/>
<rect x="811.71" y="243" width="9.6" height="74.8" fill="#3876b3" stroke="#2a5c95" stroke-width="0.8"/>
<rect x="826.39" y="243" width="9.6" height="74.8" fill="#3876b3" stroke="#2a5c95" stroke-width="0.8"/>
<rect x="841.07" y="243" width="9.6" height="74.8" fill="#3876b3" stroke="#2a5c95" stroke-width="0.8"/>
<rect x="855.75" y="241" width="9.6" height="76.8" fill="#3876b3" stroke="#2a5c95" stroke-width="0.8"/>
<rect x="870.43" y="239.6" width="9.6" height="78.2" fill="#3876b3" stroke="#2a5c95" stroke-width="0.8"/>
<rect x="885.11" y="238.6" width="9.6" height="79.2" fill="#3876b3" stroke="#2a5c95" stroke-width="0.8"/>
<rect x="899.79" y="238" width="9.6" height="79.8" fill="#3876b3" stroke="#2a5c95" stroke-width="0.8"/>
<rect x="914.47" y="238" width="9.6" height="79.8" fill="#3876b3" stroke="#2a5c95" stroke-width="0.8"/>
</g>
<rect x="714.6" y="335.4" width="5.2" height="5.2" fill="#a6cae2"/>
<text class="s" x="723.1" y="339.8" font-size="6.1" text-anchor="start" fill="#6f6f6f">used space</text>
<rect x="758.6" y="335.4" width="5.2" height="5.2" fill="#3876b3"/>
<text class="s" x="767.1" y="339.8" font-size="6.1" text-anchor="start" fill="#6f6f6f">used space (bytes)</text>
<path d="M949.2 342 L949.2 345.6 L945.6 345.6 Z" fill="#5a5a5a"/>
<line x1="166" y1="384" x2="403" y2="384" stroke="#eaeaea" stroke-width="0.7"/>
<text class="m" x="164" y="386" font-size="5.6" text-anchor="end" fill="#8a8a8a">200</text>
<line x1="166" y1="399" x2="403" y2="399" stroke="#eaeaea" stroke-width="0.7"/>
<text class="m" x="164" y="401" font-size="5.6" text-anchor="end" fill="#8a8a8a">150</text>
<line x1="166" y1="414" x2="403" y2="414" stroke="#eaeaea" stroke-width="0.7"/>
<text class="m" x="164" y="416" font-size="5.6" text-anchor="end" fill="#8a8a8a">100</text>
<line x1="166" y1="429" x2="403" y2="429" stroke="#eaeaea" stroke-width="0.7"/>
<text class="m" x="164" y="431" font-size="5.6" text-anchor="end" fill="#8a8a8a">50</text>
<text class="m" x="164" y="446" font-size="5.6" text-anchor="end" fill="#8a8a8a">0</text>
<line x1="170" y1="384" x2="170" y2="444" stroke="#e2e2e2" stroke-width="0.7"/>
<line x1="166" y1="444" x2="403" y2="444" stroke="#c2c2c2" stroke-width="0.9"/>
<text class="s" x="170" y="455.5" font-size="5.8" text-anchor="middle" fill="#8a8a8a">12:58 PM</text>
<text class="s" x="253.2" y="455.5" font-size="5.8" text-anchor="middle" fill="#8a8a8a">1:03 PM</text>
<text class="s" x="336.4" y="455.5" font-size="5.8" text-anchor="middle" fill="#8a8a8a">1:08 PM</text>
<polyline fill="none" stroke="#c5dcec" stroke-width="2.7" opacity="0.55" points="170,425.4 186.64,425.2 203.28,424.6 219.92,424.8 236.56,425.4 253.2,425.4 269.84,425.2 286.48,425.1 303.12,425.1 319.76,425.4 336.4,425.4 353.04,425.2 369.68,425.1 386.32,425 402.96,425.3"/>
<polyline fill="none" stroke="#8dbbd8" stroke-width="1.1" points="170,425.4 186.64,425.2 203.28,424.6 219.92,424.8 236.56,425.4 253.2,425.4 269.84,425.2 286.48,425.1 303.12,425.1 319.76,425.4 336.4,425.4 353.04,425.2 369.68,425.1 386.32,425 402.96,425.3"/>
<circle cx="170" cy="425.4" r="1.6" fill="#6a9fc6"/>
<circle cx="186.64" cy="425.2" r="1.6" fill="#6a9fc6"/>
<circle cx="203.28" cy="424.6" r="1.6" fill="#6a9fc6"/>
<circle cx="219.92" cy="424.8" r="1.6" fill="#6a9fc6"/>
<circle cx="236.56" cy="425.4" r="1.6" fill="#6a9fc6"/>
<circle cx="253.2" cy="425.4" r="1.6" fill="#6a9fc6"/>
<circle cx="269.84" cy="425.2" r="1.6" fill="#6a9fc6"/>
<circle cx="286.48" cy="425.1" r="1.6" fill="#6a9fc6"/>
<circle cx="303.12" cy="425.1" r="1.6" fill="#6a9fc6"/>
<circle cx="319.76" cy="425.4" r="1.6" fill="#6a9fc6"/>
<circle cx="336.4" cy="425.4" r="1.6" fill="#6a9fc6"/>
<circle cx="353.04" cy="425.2" r="1.6" fill="#6a9fc6"/>
<circle cx="369.68" cy="425.1" r="1.6" fill="#6a9fc6"/>
<circle cx="386.32" cy="425" r="1.6" fill="#6a9fc6"/>
<circle cx="402.96" cy="425.3" r="1.6" fill="#6a9fc6"/>
<polyline fill="none" stroke="#c4d6e6" stroke-width="2.4000000000000004" opacity="0.55" points="170,410.6 186.64,410.4 203.28,409.6 219.92,409.8 236.56,410.6 253.2,410.6 269.84,410.4 286.48,410.2 303.12,410.2 319.76,410.6 336.4,410.6 353.04,410.4 369.68,410.2 386.32,410.1 402.96,410.5"/>
<polyline fill="none" stroke="#6d92b4" stroke-width="0.8" points="170,410.6 186.64,410.4 203.28,409.6 219.92,409.8 236.56,410.6 253.2,410.6 269.84,410.4 286.48,410.2 303.12,410.2 319.76,410.6 336.4,410.6 353.04,410.4 369.68,410.2 386.32,410.1 402.96,410.5"/>
<circle cx="170" cy="410.6" r="1.45" fill="#1d3a66"/>
<circle cx="186.64" cy="410.4" r="1.45" fill="#1d3a66"/>
<circle cx="203.28" cy="409.6" r="1.45" fill="#1d3a66"/>
<circle cx="219.92" cy="409.8" r="1.45" fill="#1d3a66"/>
<circle cx="236.56" cy="410.6" r="1.45" fill="#1d3a66"/>
<circle cx="253.2" cy="410.6" r="1.45" fill="#1d3a66"/>
<circle cx="269.84" cy="410.4" r="1.45" fill="#1d3a66"/>
<circle cx="286.48" cy="410.2" r="1.45" fill="#1d3a66"/>
<circle cx="303.12" cy="410.2" r="1.45" fill="#1d3a66"/>
<circle cx="319.76" cy="410.6" r="1.45" fill="#1d3a66"/>
<circle cx="336.4" cy="410.6" r="1.45" fill="#1d3a66"/>
<circle cx="353.04" cy="410.4" r="1.45" fill="#1d3a66"/>
<circle cx="369.68" cy="410.2" r="1.45" fill="#1d3a66"/>
<circle cx="386.32" cy="410.1" r="1.45" fill="#1d3a66"/>
<circle cx="402.96" cy="410.5" r="1.45" fill="#1d3a66"/>
<polyline fill="none" stroke="#f0ee9c" stroke-width="2.9000000000000004" opacity="0.55" points="170,388.4 186.64,388.2 203.28,387.2 219.92,387.6 236.56,388.4 253.2,388.4 269.84,388.2 286.48,388 303.12,388 319.76,388.4 336.4,388.4 353.04,388.2 369.68,388 386.32,387.9 402.96,388.3"/>
<polyline fill="none" stroke="#dfdc48" stroke-width="1.3" points="170,388.4 186.64,388.2 203.28,387.2 219.92,387.6 236.56,388.4 253.2,388.4 269.84,388.2 286.48,388 303.12,388 319.76,388.4 336.4,388.4 353.04,388.2 369.68,388 386.32,387.9 402.96,388.3"/>
<circle cx="170" cy="388.4" r="1.65" fill="#d6d243"/>
<circle cx="186.64" cy="388.2" r="1.65" fill="#d6d243"/>
<circle cx="203.28" cy="387.2" r="1.65" fill="#d6d243"/>
<circle cx="219.92" cy="387.6" r="1.65" fill="#d6d243"/>
<circle cx="236.56" cy="388.4" r="1.65" fill="#d6d243"/>
<circle cx="253.2" cy="388.4" r="1.65" fill="#d6d243"/>
<circle cx="269.84" cy="388.2" r="1.65" fill="#d6d243"/>
<circle cx="286.48" cy="388" r="1.65" fill="#d6d243"/>
<circle cx="303.12" cy="388" r="1.65" fill="#d6d243"/>
<circle cx="319.76" cy="388.4" r="1.65" fill="#d6d243"/>
<circle cx="336.4" cy="388.4" r="1.65" fill="#d6d243"/>
<circle cx="353.04" cy="388.2" r="1.65" fill="#d6d243"/>
<circle cx="369.68" cy="388" r="1.65" fill="#d6d243"/>
<circle cx="386.32" cy="387.9" r="1.65" fill="#d6d243"/>
<circle cx="402.96" cy="388.3" r="1.65" fill="#d6d243"/>
<rect x="174" y="461.4" width="5.2" height="5.2" fill="#a6cae2"/>
<text class="s" x="182.5" y="465.8" font-size="6.1" text-anchor="start" fill="#6f6f6f">jvm threads</text>
<rect x="219" y="461.4" width="5.2" height="5.2" fill="#3876b3"/>
<text class="s" x="227.5" y="465.8" font-size="6.1" text-anchor="start" fill="#6f6f6f">jvm daemon threads</text>
<rect x="287" y="461.4" width="5.2" height="5.2" fill="#e6df4c"/>
<text class="s" x="295.5" y="465.8" font-size="6.1" text-anchor="start" fill="#6f6f6f">jvm peak threads</text>
<path d="M409 467.4 L409 471 L405.4 471 Z" fill="#5a5a5a"/>
<line x1="439.6" y1="384" x2="673" y2="384" stroke="#eaeaea" stroke-width="0.7"/>
<text class="m" x="437.6" y="386" font-size="5.6" text-anchor="end" fill="#8a8a8a">9 GB</text>
<line x1="439.6" y1="393.04" x2="673" y2="393.04" stroke="#eaeaea" stroke-width="0.7"/>
<text class="m" x="437.6" y="395.04" font-size="5.6" text-anchor="end" fill="#8a8a8a">8 GB</text>
<line x1="439.6" y1="402.09" x2="673" y2="402.09" stroke="#eaeaea" stroke-width="0.7"/>
<text class="m" x="437.6" y="404.09" font-size="5.6" text-anchor="end" fill="#8a8a8a">7 GB</text>
<line x1="439.6" y1="411.13" x2="673" y2="411.13" stroke="#eaeaea" stroke-width="0.7"/>
<text class="m" x="437.6" y="413.13" font-size="5.6" text-anchor="end" fill="#8a8a8a">6 GB</text>
<line x1="439.6" y1="420.18" x2="673" y2="420.18" stroke="#eaeaea" stroke-width="0.7"/>
<text class="m" x="437.6" y="422.18" font-size="5.6" text-anchor="end" fill="#8a8a8a">5 GB</text>
<line x1="439.6" y1="429.22" x2="673" y2="429.22" stroke="#eaeaea" stroke-width="0.7"/>
<text class="m" x="437.6" y="431.22" font-size="5.6" text-anchor="end" fill="#8a8a8a">4 GB</text>
<line x1="439.6" y1="438.27" x2="673" y2="438.27" stroke="#eaeaea" stroke-width="0.7"/>
<text class="m" x="437.6" y="440.27" font-size="5.6" text-anchor="end" fill="#8a8a8a">3 GB</text>
<line x1="439.6" y1="447.31" x2="673" y2="447.31" stroke="#eaeaea" stroke-width="0.7"/>
<text class="m" x="437.6" y="449.31" font-size="5.6" text-anchor="end" fill="#8a8a8a">2 GB</text>
<line x1="439.6" y1="456.36" x2="673" y2="456.36" stroke="#eaeaea" stroke-width="0.7"/>
<text class="m" x="437.6" y="458.36" font-size="5.6" text-anchor="end" fill="#8a8a8a">1 GB</text>
<text class="m" x="437.6" y="467.4" font-size="5.6" text-anchor="end" fill="#8a8a8a">0 B</text>
<line x1="443.6" y1="384" x2="443.6" y2="465.4" stroke="#e2e2e2" stroke-width="0.7"/>
<line x1="439.6" y1="465.4" x2="673" y2="465.4" stroke="#c2c2c2" stroke-width="0.9"/>
<text class="s" x="444" y="476.7" font-size="5.8" text-anchor="middle" fill="#8a8a8a">12:58 PM</text>
<text class="s" x="525.6" y="476.7" font-size="5.8" text-anchor="middle" fill="#8a8a8a">1:03 PM</text>
<text class="s" x="607.4" y="476.7" font-size="5.8" text-anchor="middle" fill="#8a8a8a">1:08 PM</text>
<polygon fill="#a6cae2" opacity="0.9" points="443.6,430 459.99,429.6 476.37,429.8 492.76,430 509.14,430 525.53,430 541.91,430 558.3,430 574.69,430 591.07,430 607.46,429.8 623.84,429.4 640.23,429 656.61,429.2 673,429.6 673,465.2 656.61,465.2 640.23,465.2 623.84,465.2 607.46,465.2 591.07,465.2 574.69,465.2 558.3,465.2 541.91,465.2 525.53,465.2 509.14,465.2 492.76,465.2 476.37,465.2 459.99,465.2 443.6,465.2"/>
<polygon fill="#3876b3" opacity="0.95" points="443.6,391.6 459.99,392.6 476.37,393.5 492.76,393.7 509.14,393.7 525.53,393.7 541.91,393.7 558.3,393.7 574.69,393.7 591.07,393.6 607.46,393.4 623.84,393 640.23,392.6 656.61,392.8 673,393 673,429.6 656.61,429.2 640.23,429 623.84,429.4 607.46,429.8 591.07,430 574.69,430 558.3,430 541.91,430 525.53,430 509.14,430 492.76,430 476.37,429.8 459.99,429.6 443.6,430"/>
<polygon fill="#b2dc8c" opacity="1" points="443.6,390.7 459.99,391.7 476.37,392.6 492.76,392.8 509.14,392.8 525.53,392.8 541.91,392.8 558.3,392.8 574.69,392.8 591.07,392.7 607.46,392.5 623.84,392.1 640.23,391.7 656.61,391.9 673,392.1 673,393 656.61,392.8 640.23,392.6 623.84,393 607.46,393.4 591.07,393.6 574.69,393.7 558.3,393.7 541.91,393.7 525.53,393.7 509.14,393.7 492.76,393.7 476.37,393.5 459.99,392.6 443.6,391.6"/>
<polygon fill="#3f9c38" opacity="1" points="443.6,389.4 459.99,389.4 476.37,389.4 492.76,389.4 509.14,389.4 525.53,389.4 541.91,389.4 558.3,389.4 574.69,389.4 591.07,389.4 607.46,389.4 623.84,389.4 640.23,389.4 656.61,389.4 673,389.4 673,392.1 656.61,391.9 640.23,391.7 623.84,392.1 607.46,392.5 591.07,392.7 574.69,392.8 558.3,392.8 541.91,392.8 525.53,392.8 509.14,392.8 492.76,392.8 476.37,392.6 459.99,391.7 443.6,390.7"/>
<line x1="443.6" y1="393.04" x2="673" y2="393.04" stroke="rgba(10,30,60,0.09)" stroke-width="0.7"/>
<line x1="443.6" y1="402.09" x2="673" y2="402.09" stroke="rgba(10,30,60,0.09)" stroke-width="0.7"/>
<line x1="443.6" y1="411.13" x2="673" y2="411.13" stroke="rgba(10,30,60,0.09)" stroke-width="0.7"/>
<line x1="443.6" y1="420.18" x2="673" y2="420.18" stroke="rgba(10,30,60,0.09)" stroke-width="0.7"/>
<line x1="443.6" y1="429.22" x2="673" y2="429.22" stroke="rgba(10,30,60,0.09)" stroke-width="0.7"/>
<line x1="443.6" y1="438.27" x2="673" y2="438.27" stroke="rgba(10,30,60,0.09)" stroke-width="0.7"/>
<line x1="443.6" y1="447.31" x2="673" y2="447.31" stroke="rgba(10,30,60,0.09)" stroke-width="0.7"/>
<line x1="443.6" y1="456.36" x2="673" y2="456.36" stroke="rgba(10,30,60,0.09)" stroke-width="0.7"/>
<rect x="444.4" y="482.4" width="5.2" height="5.2" fill="#a6cae2"/>
<text class="s" x="452.9" y="486.8" font-size="6.1" text-anchor="start" fill="#6f6f6f">used</text>
<rect x="470.6" y="482.4" width="5.2" height="5.2" fill="#3876b3"/>
<text class="s" x="479.1" y="486.8" font-size="6.1" text-anchor="start" fill="#6f6f6f">cached</text>
<rect x="503.6" y="482.4" width="5.2" height="5.2" fill="#b2dc8c"/>
<text class="s" x="512.1" y="486.8" font-size="6.1" text-anchor="start" fill="#6f6f6f">buffered</text>
<rect x="540" y="482.4" width="5.2" height="5.2" fill="#3f9c38"/>
<text class="s" x="548.5" y="486.8" font-size="6.1" text-anchor="start" fill="#6f6f6f">free</text>
<path d="M679.2 488.4 L679.2 492 L675.6 492 Z" fill="#5a5a5a"/>
<line x1="720" y1="384.4" x2="944" y2="384.4" stroke="#eaeaea" stroke-width="0.7"/>
<text class="m" x="718" y="386.4" font-size="5.6" text-anchor="end" fill="#8a8a8a">40 KB/s</text>
<line x1="720" y1="394.55" x2="944" y2="394.55" stroke="#eaeaea" stroke-width="0.7"/>
<text class="m" x="718" y="396.55" font-size="5.6" text-anchor="end" fill="#8a8a8a">35 KB/s</text>
<line x1="720" y1="404.7" x2="944" y2="404.7" stroke="#eaeaea" stroke-width="0.7"/>
<text class="m" x="718" y="406.7" font-size="5.6" text-anchor="end" fill="#8a8a8a">30 KB/s</text>
<line x1="720" y1="414.85" x2="944" y2="414.85" stroke="#eaeaea" stroke-width="0.7"/>
<text class="m" x="718" y="416.85" font-size="5.6" text-anchor="end" fill="#8a8a8a">25 KB/s</text>
<line x1="720" y1="425" x2="944" y2="425" stroke="#eaeaea" stroke-width="0.7"/>
<text class="m" x="718" y="427" font-size="5.6" text-anchor="end" fill="#8a8a8a">20 KB/s</text>
<line x1="720" y1="435.15" x2="944" y2="435.15" stroke="#eaeaea" stroke-width="0.7"/>
<text class="m" x="718" y="437.15" font-size="5.6" text-anchor="end" fill="#8a8a8a">15 KB/s</text>
<line x1="720" y1="445.3" x2="944" y2="445.3" stroke="#eaeaea" stroke-width="0.7"/>
<text class="m" x="718" y="447.3" font-size="5.6" text-anchor="end" fill="#8a8a8a">10 KB/s</text>
<line x1="720" y1="455.45" x2="944" y2="455.45" stroke="#eaeaea" stroke-width="0.7"/>
<text class="m" x="718" y="457.45" font-size="5.6" text-anchor="end" fill="#8a8a8a">5 KB/s</text>
<text class="m" x="718" y="467.6" font-size="5.6" text-anchor="end" fill="#8a8a8a">0 B/s</text>
<line x1="724" y1="384.4" x2="724" y2="465.6" stroke="#e2e2e2" stroke-width="0.7"/>
<line x1="720" y1="465.6" x2="944" y2="465.6" stroke="#c2c2c2" stroke-width="0.9"/>
<text class="s" x="724.4" y="476.7" font-size="5.8" text-anchor="middle" fill="#8a8a8a">12:58 PM</text>
<text class="s" x="802" y="476.7" font-size="5.8" text-anchor="middle" fill="#8a8a8a">1:03 PM</text>
<text class="s" x="879.8" y="476.7" font-size="5.8" text-anchor="middle" fill="#8a8a8a">1:08 PM</text>
<clipPath id="c9"><rect x="724.4" y="383.4" width="219" height="82.2"/></clipPath>
<g clip-path="url(#c9)">
<rect x="719.3" y="437.4" width="10.2" height="27.8" fill="#a6cae2" stroke="#8fb6d2" stroke-width="0.6" opacity="0.95"/>
<rect x="719.3" y="393" width="10.2" height="44.4" fill="#3876b3" stroke="#2a5c95" stroke-width="0.7" opacity="0.96"/>
<rect x="734.9" y="442" width="10.2" height="23.2" fill="#a6cae2" stroke="#8fb6d2" stroke-width="0.6" opacity="0.95"/>
<rect x="734.9" y="418" width="10.2" height="24" fill="#3876b3" stroke="#2a5c95" stroke-width="0.7" opacity="0.96"/>
<rect x="750.5" y="442" width="10.2" height="23.2" fill="#a6cae2" stroke="#8fb6d2" stroke-width="0.6" opacity="0.95"/>
<rect x="750.5" y="418" width="10.2" height="24" fill="#3876b3" stroke="#2a5c95" stroke-width="0.7" opacity="0.96"/>
<rect x="766.1" y="441" width="10.2" height="24.2" fill="#a6cae2" stroke="#8fb6d2" stroke-width="0.6" opacity="0.95"/>
<rect x="766.1" y="414" width="10.2" height="27" fill="#3876b3" stroke="#2a5c95" stroke-width="0.7" opacity="0.96"/>
<rect x="781.7" y="442" width="10.2" height="23.2" fill="#a6cae2" stroke="#8fb6d2" stroke-width="0.6" opacity="0.95"/>
<rect x="781.7" y="418.4" width="10.2" height="23.6" fill="#3876b3" stroke="#2a5c95" stroke-width="0.7" opacity="0.96"/>
<rect x="797.3" y="442" width="10.2" height="23.2" fill="#a6cae2" stroke="#8fb6d2" stroke-width="0.6" opacity="0.95"/>
<rect x="797.3" y="418" width="10.2" height="24" fill="#3876b3" stroke="#2a5c95" stroke-width="0.7" opacity="0.96"/>
<rect x="812.9" y="442" width="10.2" height="23.2" fill="#a6cae2" stroke="#8fb6d2" stroke-width="0.6" opacity="0.95"/>
<rect x="812.9" y="418.4" width="10.2" height="23.6" fill="#3876b3" stroke="#2a5c95" stroke-width="0.7" opacity="0.96"/>
<rect x="828.5" y="442" width="10.2" height="23.2" fill="#a6cae2" stroke="#8fb6d2" stroke-width="0.6" opacity="0.95"/>
<rect x="828.5" y="418" width="10.2" height="24" fill="#3876b3" stroke="#2a5c95" stroke-width="0.7" opacity="0.96"/>
<rect x="844.1" y="442" width="10.2" height="23.2" fill="#a6cae2" stroke="#8fb6d2" stroke-width="0.6" opacity="0.95"/>
<rect x="844.1" y="418.4" width="10.2" height="23.6" fill="#3876b3" stroke="#2a5c95" stroke-width="0.7" opacity="0.96"/>
<rect x="859.7" y="442" width="10.2" height="23.2" fill="#a6cae2" stroke="#8fb6d2" stroke-width="0.6" opacity="0.95"/>
<rect x="859.7" y="418.4" width="10.2" height="23.6" fill="#3876b3" stroke="#2a5c95" stroke-width="0.7" opacity="0.96"/>
<rect x="875.3" y="439.4" width="10.2" height="25.8" fill="#a6cae2" stroke="#8fb6d2" stroke-width="0.6" opacity="0.95"/>
<rect x="875.3" y="396" width="10.2" height="43.4" fill="#3876b3" stroke="#2a5c95" stroke-width="0.7" opacity="0.96"/>
<rect x="890.9" y="441.6" width="10.2" height="23.6" fill="#a6cae2" stroke="#8fb6d2" stroke-width="0.6" opacity="0.95"/>
<rect x="890.9" y="416.4" width="10.2" height="25.2" fill="#3876b3" stroke="#2a5c95" stroke-width="0.7" opacity="0.96"/>
<rect x="906.5" y="441.8" width="10.2" height="23.4" fill="#a6cae2" stroke="#8fb6d2" stroke-width="0.6" opacity="0.95"/>
<rect x="906.5" y="417" width="10.2" height="24.8" fill="#3876b3" stroke="#2a5c95" stroke-width="0.7" opacity="0.96"/>
<rect x="922.1" y="442" width="10.2" height="23.2" fill="#a6cae2" stroke="#8fb6d2" stroke-width="0.6" opacity="0.95"/>
<rect x="922.1" y="418.4" width="10.2" height="23.6" fill="#3876b3" stroke="#2a5c95" stroke-width="0.7" opacity="0.96"/>
<rect x="937.7" y="442" width="10.2" height="23.2" fill="#a6cae2" stroke="#8fb6d2" stroke-width="0.6" opacity="0.95"/>
<rect x="937.7" y="418.4" width="10.2" height="23.6" fill="#3876b3" stroke="#2a5c95" stroke-width="0.7" opacity="0.96"/>
</g>
<rect x="714.6" y="482.4" width="5.2" height="5.2" fill="#a6cae2"/>
<text class="s" x="723.1" y="486.8" font-size="6.1" text-anchor="start" fill="#6f6f6f">transmitted</text>
<rect x="758.6" y="482.4" width="5.2" height="5.2" fill="#3876b3"/>
<text class="s" x="767.1" y="486.8" font-size="6.1" text-anchor="start" fill="#6f6f6f">received</text>
<path d="M949.2 488.4 L949.2 492 L945.6 492 Z" fill="#5a5a5a"/>
</svg>
<div id="iconbar">
<svg class="abs" style="left:0;top:0" width="32" height="500" viewBox="0 0 32 500"><g fill="#4c99df" stroke="none"><path d="M11.2 10.2 C10.8 6.4 13.6 4.2 17.4 4.2 C21.4 4.2 24 6.8 23.7 10.3 C23.6 12.4 22.8 14 21.4 15 L13.2 15 C12 14 11.3 12.2 11.2 10.2 Z"/></g><g fill="none" stroke="#4c99df" stroke-width="1.9" stroke-linecap="round"><path d="M13.2 12.6 C11.6 14.4 9.4 14.2 8.6 12.8 C8 11.4 9.4 10.6 10.2 11.4"/><path d="M13 13.6 C11.4 16.6 8.2 17.8 5.6 16.6 C3.6 15.6 3.8 13 5.8 13 C7.2 13.1 7.4 14.6 6.4 15"/><path d="M14.8 14 C14 17 13 19 11.8 20.6 C11 21.8 12.4 22.8 13.4 21.8"/><path d="M17.2 14.2 C17.6 17.4 18.2 19.6 16.8 21.2 C15.8 22.2 14.8 21.4 15.4 20.6"/><path d="M19.4 14 C20.4 16.6 22 18.6 24.4 18.6 C26.8 18.6 27.6 16.2 26.2 15.2 C25.2 14.6 24.2 15.4 24.8 16.2"/><path d="M21.2 13 C22.6 14 24 13.6 24.6 12.6"/></g><path d="M15.2 10.4 L18 11.4 M19.6 11.2 L22 10.4" stroke="#1c2b4e" stroke-width="1.1" stroke-linecap="round"/><rect x="6" y="30" width="18" height="16.6" rx="1.2" fill="#141f3e"/><circle cx="13.7" cy="37.4" r="3.1" fill="none" stroke="#a2abc1" stroke-width="1.2"/><path d="M16.1 39.8 L18.4 42.2" stroke="#a2abc1" stroke-width="1.4" stroke-linecap="round"/><g transform="translate(15.4 65.6) rotate(45)" fill="#a2abc1"><path d="M0 -6.4 C3 -3.8 3.2 0.8 2.2 3 L-2.2 3 C-3.2 0.8 -3 -3.8 0 -6.4 Z"/><path d="M-2.6 0.2 L-4.8 3.6 L-2.4 3 Z M2.6 0.2 L4.8 3.6 L2.4 3 Z"/><circle cx="0" cy="-1.8" r="1.35" fill="#1c2b4e"/><path d="M-1.4 4.2 V5.6 M0 4.4 V6.8 M1.4 4.2 V5.6" stroke="#a2abc1" stroke-width="0.8" stroke-linecap="round"/></g><rect x="10.6" y="89.0" width="2.5" height="2.5" rx="0.3" fill="#a0a8be"/><rect x="13.7" y="89.0" width="2.5" height="2.5" rx="0.3" fill="#a0a8be"/><rect x="16.8" y="89.0" width="2.5" height="2.5" rx="0.3" fill="#a0a8be"/><rect x="10.6" y="92.1" width="2.5" height="2.5" rx="0.3" fill="#a0a8be"/><rect x="13.7" y="92.1" width="2.5" height="2.5" rx="0.3" fill="#a0a8be"/><rect x="16.8" y="92.1" width="2.5" height="2.5" rx="0.3" fill="#a0a8be"/><rect x="10.6" y="95.2" width="2.5" height="2.5" rx="0.3" fill="#a0a8be"/><rect x="13.7" y="95.2" width="2.5" height="2.5" rx="0.3" fill="#a0a8be"/><rect x="16.8" y="95.2" width="2.5" height="2.5" rx="0.3" fill="#a0a8be"/><circle cx="15" cy="111.5" r="5.2" fill="#b4bbcd"/><path d="M15 112 L12.4 109" stroke="#1c2b4e" stroke-width="1.2" stroke-linecap="round"/><circle cx="15" cy="112.2" r="1.1" fill="#1c2b4e"/><path d="M11.3 112.4h1M17.7 112.4h1M15 108v0.9M17.5 109.4l-.6.6" stroke="#1c2b4e" stroke-width="0.7"/><circle cx="15" cy="129.3" r="5.2" fill="#b4bbcd"/><path d="M15 126.4 V130.2" stroke="#1c2b4e" stroke-width="1.5" stroke-linecap="round"/><circle cx="15" cy="132.2" r="0.85" fill="#1c2b4e"/><path d="M11.4 143.6 V153" stroke="#a2abc1" stroke-width="1.3" stroke-linecap="round"/><path d="M12 144 H19.6 L18 147 L19.6 150 H12 Z" fill="#a2abc1"/><rect x="10.4" y="161.8" width="9.2" height="2.6" rx="0.5" fill="#a2abc1"/><path d="M11 165.2 H19 V170.2 A0.8 0.8 0 0 1 18.2 171 H11.8 A0.8 0.8 0 0 1 11 170.2 Z" fill="#a2abc1"/><rect x="13.4" y="166.4" width="3.2" height="1.1" rx="0.5" fill="#1c2b4e"/><rect x="6.2" y="176.2" width="17.6" height="16.8" rx="1.6" fill="#45a0e6"/><rect x="10.4" y="180" width="9.2" height="9.2" rx="1" fill="#dcecf9"/><path d="M12.8 187.4 V185.2 M15 187.4 V182.4 M17.2 187.4 V184" stroke="#45a0e6" stroke-width="1.3"/><path d="M11.2 198.6 H16.4 L19 201.2 V208.4 H11.2 Z" fill="#a2abc1"/><path d="M16.2 198.6 V201.4 H19" fill="none" stroke="#1c2b4e" stroke-width="0.7"/><path d="M12.8 203.4 H17.4 M12.8 205.2 H17.4 M12.8 207 H15.6" stroke="#1c2b4e" stroke-width="0.7"/><path d="M10.6 218.6 V216.6 H12.6 M17.4 216.6 H19.4 V218.6 M19.4 223.4 V225.4 H17.4 M12.6 225.4 H10.6 V223.4" fill="none" stroke="#a2abc1" stroke-width="1.1"/><circle cx="15" cy="219.8" r="1.5" fill="#a2abc1"/><path d="M12.4 224 C12.6 221.8 17.4 221.8 17.6 224 Z" fill="#a2abc1"/><rect x="11" y="236.6" width="8" height="6.6" rx="1.6" fill="#a2abc1"/><path d="M15 234.4 V236.6" stroke="#a2abc1" stroke-width="1"/><circle cx="15" cy="234.2" r="0.9" fill="#a2abc1"/><rect x="9.6" y="238.6" width="1.2" height="2.8" rx="0.5" fill="#a2abc1"/><rect x="19.2" y="238.6" width="1.2" height="2.8" rx="0.5" fill="#a2abc1"/><circle cx="13.4" cy="239.2" r="0.9" fill="#1c2b4e"/><circle cx="16.6" cy="239.2" r="0.9" fill="#1c2b4e"/><path d="M13.2 241.6 H16.8" stroke="#1c2b4e" stroke-width="0.7"/><path d="M12.6 243.2 H17.4 V244.6 H12.6 Z" fill="#a2abc1"/><circle cx="12.4" cy="259.2" r="2.7" fill="#a2abc1"/><circle cx="17.6" cy="259.2" r="2.7" fill="#a2abc1"/><path d="M11 257.4 L12 253.6 H14 V258 M19 257.4 L18 253.6 H16 V258" fill="#a2abc1"/><rect x="13.6" y="255.6" width="2.8" height="2.4" fill="#a2abc1"/><circle cx="12.4" cy="259.4" r="1.1" fill="#1c2b4e"/><circle cx="17.6" cy="259.4" r="1.1" fill="#1c2b4e"/><rect x="5.8" y="386" width="18.4" height="18.4" rx="1.6" fill="#d9472b"/><g fill="#fff"><rect x="10.2" y="392" width="9.6" height="2.4" rx="0.3"/><rect x="10.9" y="395" width="8.2" height="5" rx="0.4"/></g><path d="M15 392 V400" stroke="#d9472b" stroke-width="1.1"/><path d="M15 392 C13.4 389.2 11.4 390.2 12.6 391.6 M15 392 C16.6 389.2 18.6 390.2 17.4 391.6" fill="none" stroke="#fff" stroke-width="1"/><path d="M10.4 411.6 H12.6 L18.4 408.6 V417.6 L12.6 414.8 H10.4 Z" fill="#a2abc1"/><path d="M12 415 L12.8 418.2 H14.4 L13.8 415" fill="#a2abc1"/><path d="M19.6 411.6 C20.4 412.4 20.4 413.8 19.6 414.6" fill="none" stroke="#a2abc1" stroke-width="0.9"/><circle cx="15" cy="432" r="5" fill="#b4bbcd"/><text x="15" y="434.9" font-size="8" font-weight="bold" text-anchor="middle" fill="#1c2b4e" class="s">?</text><g fill="#a2abc1"><circle cx="15" cy="445.6" r="1.5"/><circle cx="11" cy="446.6" r="1.2"/><circle cx="19" cy="446.6" r="1.2"/><path d="M13 447.8 H17 V451.6 H16.2 V454.4 H13.8 V451.6 H13 Z"/><path d="M9.6 448.4 H12.2 V451 H11.8 V453.4 H10.2 V451 H9.6 Z M17.8 448.4 H20.4 V451 H19.8 V453.4 H18.2 V451 H17.8 Z"/></g><path d="M9.6 450 H20.4" stroke="#1c2b4e" stroke-width="0.5"/><g transform="translate(15 467.5)"><circle r="3.3" fill="#a2abc1"/><rect x="-1" y="-5" width="2" height="2.6" fill="#a2abc1" transform="rotate(0)"/><rect x="-1" y="-5" width="2" height="2.6" fill="#a2abc1" transform="rotate(45)"/><rect x="-1" y="-5" width="2" height="2.6" fill="#a2abc1" transform="rotate(90)"/><rect x="-1" y="-5" width="2" height="2.6" fill="#a2abc1" transform="rotate(135)"/><rect x="-1" y="-5" width="2" height="2.6" fill="#a2abc1" transform="rotate(180)"/><rect x="-1" y="-5" width="2" height="2.6" fill="#a2abc1" transform="rotate(225)"/><rect x="-1" y="-5" width="2" height="2.6" fill="#a2abc1" transform="rotate(270)"/><rect x="-1" y="-5" width="2" height="2.6" fill="#a2abc1" transform="rotate(315)"/><circle r="1.5" fill="#1c2b4e"/></g><circle cx="15" cy="486" r="6.4" fill="#6b5a4e"/><circle cx="15" cy="485" r="3.4" fill="#d9b49c"/><path d="M9.6 489.4 C11 486.6 19 486.6 20.4 489.4 C19 492.6 11 492.6 9.6 489.4Z" fill="#c9cdd4"/><path d="M11.8 483.6 C12.4 480.6 17.6 480.6 18.2 483.6 C17 482.6 13 482.6 11.8 483.6Z" fill="#e8e4de"/></svg>
</div>
<div id="edge"></div>
<div id="menu">
<div class="app">TestCassandra</div>
<svg class="abs" style="left:91.6px;top:11.2px" width="6" height="4" viewBox="0 0 6 4"><path d="M1 0.8 L3 2.9 L5 0.8" fill="none" stroke="#e8ecf5" stroke-width="1"/></svg>
<div id="ov"><span>Overview</span></div>
<div class="mi" style="top:56.3px">Profiler</div><div class="mi" style="top:75.8px">Cassandra</div><svg class="chev" style="top:79.7px" width="4" height="6" viewBox="0 0 4 6"><path d="M0.8 0.8 L3 3 L0.8 5.2" fill="none" stroke="#dfe4ef" stroke-width="0.95"/></svg><div class="mi" style="top:95.3px">OS</div><svg class="chev" style="top:99.2px" width="4" height="6" viewBox="0 0 4 6"><path d="M0.8 0.8 L3 3 L0.8 5.2" fill="none" stroke="#dfe4ef" stroke-width="0.95"/></svg><div class="mi" style="top:114.6px">JVM</div><svg class="chev" style="top:118.5px" width="4" height="6" viewBox="0 0 4 6"><path d="M0.8 0.8 L3 3 L0.8 5.2" fill="none" stroke="#dfe4ef" stroke-width="0.95"/></svg><div class="mi" style="top:134.0px">Custom Metrics</div>

<svg class="abs" style="left:14px;top:156px" width="7" height="7" viewBox="0 0 7 7"><path d="M3.5 0.6V6.4M0.6 3.5H6.4" stroke="#aeb7cc" stroke-width="0.9"/></svg>
<div class="mi" style="top:152.2px;left:26.6px;color:#9ea8c0;-webkit-text-stroke:0.2px #9ea8c0">Add Report</div>
<div class="abs" style="left:6.4px;top:177.6px;width:94px;height:1px;background:#2f3f66"></div>
<div class="mi" style="top:190px">App Settings</div>
<div class="mi" style="top:209.4px">Upgrade Plan</div>
</div>
<div id="shade"></div>
</body></html>
